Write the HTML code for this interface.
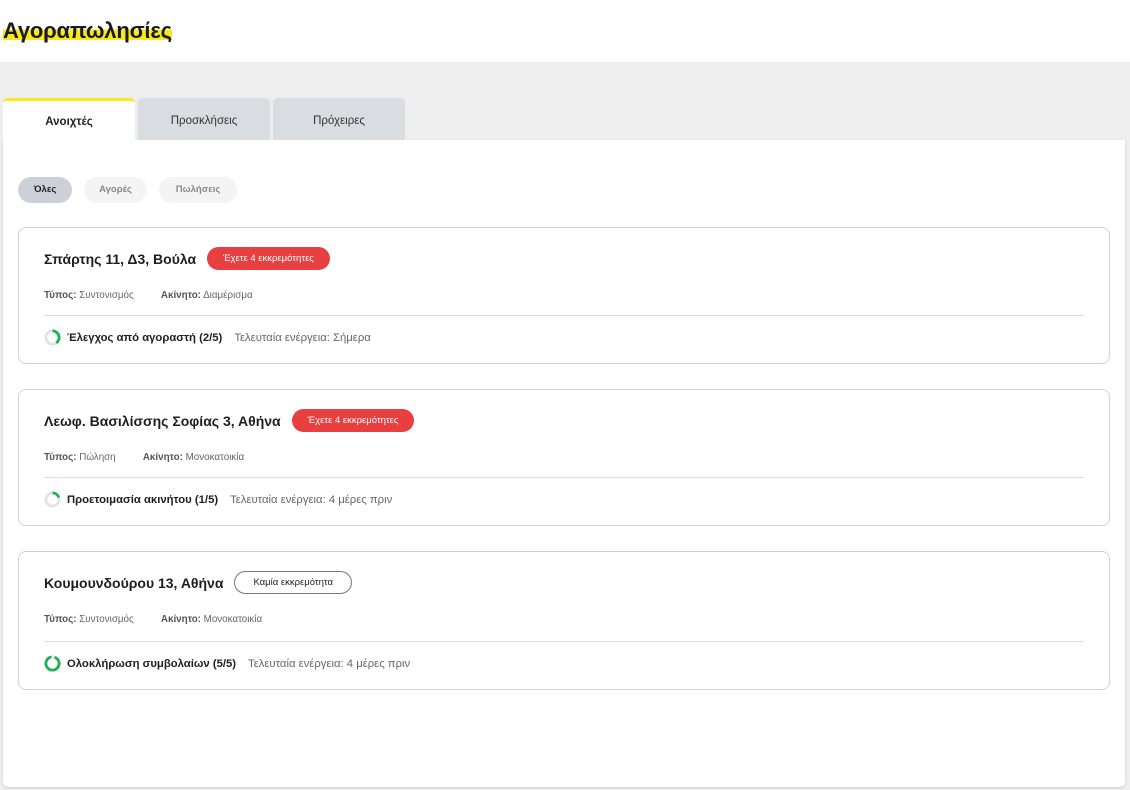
<!DOCTYPE html>
<html><head><meta charset="utf-8"><style>
*{margin:0;padding:0;box-sizing:border-box}
body{width:1130px;height:790px;background:#eeeeee;font-family:"Liberation Sans","DejaVu Sans",sans-serif;color:#222;position:relative;overflow:hidden}
.top{position:absolute;left:0;top:0;width:1130px;height:62px;background:#fff}
h1{position:absolute;left:3px;top:17px;font-size:22px;font-weight:bold;color:#1a1a1a;background:linear-gradient(transparent 45%,#f7e81f 45%,#f7e81f 82%,transparent 82%);line-height:28px;letter-spacing:-0.2px}
.tab{position:absolute;top:98px;height:42px;width:132px;background:#d9dce1;border-radius:5px 5px 0 0;font-size:11.5px;text-align:center;line-height:46px;color:#333}
.tab.act{background:#fff;border-top:3px solid #f7e81f;font-weight:bold;line-height:42px;color:#222}
.panel{position:absolute;left:3px;top:140px;width:1122px;height:647px;background:#fff;border-radius:0 0 5px 5px;box-shadow:0 1px 2px #ccc}
.pill{position:absolute;top:177px;height:26px;border-radius:13px;font-size:9.5px;font-weight:bold;line-height:26px;text-align:center;color:#888;background:#f4f4f5}
.card{position:absolute;left:18px;width:1092px;border:1px solid #cfd1d6;border-radius:8px;background:#fff}
.t{position:absolute;left:25px;top:21px;font-size:14px;font-weight:bold;color:#1e1e1e;white-space:nowrap}
.badge{display:inline-block;vertical-align:middle;margin-left:11px;height:23px;line-height:23px;padding:0 16px;border-radius:12px;background:#e84040;color:#fff;font-size:9.5px;font-weight:normal;position:relative;top:-2px}
.badge.no{background:#fff;color:#222;border:1px solid #777;line-height:21px;padding:0 18px}
.meta{position:absolute;left:25px;top:62px;font-size:9.8px;color:#666}
.meta b{color:#555}
.hr{position:absolute;left:25px;right:25px;top:87px;border-top:1px solid #ddd}
.pr{position:absolute;left:25px;top:101px;font-size:11.3px;color:#666;white-space:nowrap;display:flex;align-items:center}
.pr b{color:#1e1e1e;margin:0 12px 0 6px}
</style></head><body>
<div class="top"><h1>Αγοραπωλησίες</h1></div>
<div class="panel"></div>
<div class="tab act" style="left:3px">Ανοιχτές</div>
<div class="tab" style="left:138px">Προσκλήσεις</div>
<div class="tab" style="left:273px">Πρόχειρες</div>
<div class="pill" style="left:18px;width:54px;background:#cdd1d7;color:#222">Όλες</div>
<div class="pill" style="left:84px;width:63px">Αγορές</div>
<div class="pill" style="left:159px;width:78px">Πωλήσεις</div>

<div class="card" style="top:227px;height:137px">
<div class="t">Σπάρτης 11, Δ3, Βούλα<span class="badge">Έχετε 4 εκκρεμότητες</span></div>
<div class="meta"><b>Τύπος:</b> Συντονισμός &nbsp;&nbsp;&nbsp;&nbsp;&nbsp;&nbsp;&nbsp;&nbsp; <b>Ακίνητο:</b> Διαμέρισμα</div>
<div class="hr"></div>
<div class="pr"><svg width="17" height="17" viewBox="0 0 18 18"><circle cx="9" cy="9" r="7" fill="none" stroke="#e2e3e6" stroke-width="3"/><circle cx="9" cy="9" r="7" fill="none" stroke="#20b05a" stroke-width="3" stroke-dasharray="17.6 44" transform="rotate(-90 9 9)"/></svg><b>Έλεγχος από αγοραστή (2/5)</b>Τελευταία ενέργεια: Σήμερα</div>
</div>

<div class="card" style="top:389px;height:137px">
<div class="t">Λεωφ. Βασιλίσσης Σοφίας 3, Αθήνα<span class="badge">Έχετε 4 εκκρεμότητες</span></div>
<div class="meta"><b>Τύπος:</b> Πώληση &nbsp;&nbsp;&nbsp;&nbsp;&nbsp;&nbsp;&nbsp;&nbsp; <b>Ακίνητο:</b> Μονοκατοικία</div>
<div class="hr"></div>
<div class="pr"><svg width="17" height="17" viewBox="0 0 18 18"><circle cx="9" cy="9" r="7" fill="none" stroke="#e2e3e6" stroke-width="3"/><circle cx="9" cy="9" r="7" fill="none" stroke="#20b05a" stroke-width="3" stroke-dasharray="8.8 44" transform="rotate(-90 9 9)"/></svg><b>Προετοιμασία ακινήτου (1/5)</b>Τελευταία ενέργεια: 4 μέρες πριν</div>
</div>

<div class="card" style="top:551px;height:139px">
<div class="t">Κουμουνδούρου 13, Αθήνα<span class="badge no">Καμία εκκρεμότητα</span></div>
<div class="meta"><b>Τύπος:</b> Συντονισμός &nbsp;&nbsp;&nbsp;&nbsp;&nbsp;&nbsp;&nbsp;&nbsp; <b>Ακίνητο:</b> Μονοκατοικία</div>
<div class="hr" style="top:89px"></div>
<div class="pr" style="top:103px"><svg width="17" height="17" viewBox="0 0 18 18"><circle cx="9" cy="9" r="7" fill="none" stroke="#e2e3e6" stroke-width="3"/><circle cx="9" cy="9" r="7" fill="none" stroke="#20b05a" stroke-width="3" stroke-dasharray="40 44" transform="rotate(-70 9 9)"/></svg><b>Ολοκλήρωση συμβολαίων (5/5)</b>Τελευταία ενέργεια: 4 μέρες πριν</div>
</div>
</body></html>
